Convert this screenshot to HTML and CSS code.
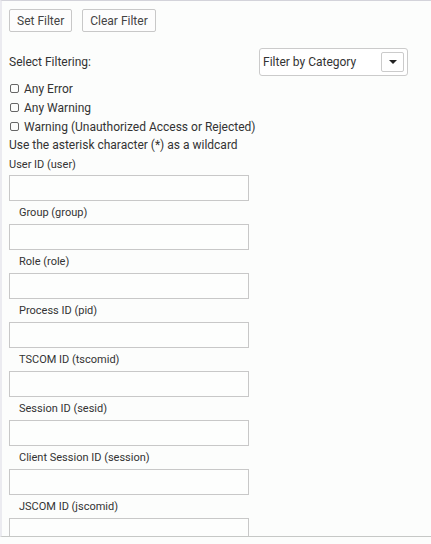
FILE: index.html
```html
<!DOCTYPE html>
<html>
<head>
<meta charset="utf-8">
<link rel="stylesheet" href="styles.css">
</head>
<body>
<div class="panel">
  <div class="buttons">
    <button class="btn">Set Filter</button>
    <button class="btn">Clear Filter</button>
  </div>
  <div class="select-row">
    <span class="select-label">Select Filtering:</span>
    <div class="select">
      <span class="select-text">Filter by Category</span>
      <span class="select-btn"><span class="caret"></span></span>
    </div>
  </div>
  <div class="checks">
    <label class="check"><span class="box"></span>Any Error</label>
    <label class="check"><span class="box"></span>Any Warning</label>
    <label class="check"><span class="box"></span>Warning (Unauthorized Access or Rejected)</label>
  </div>
  <div class="hint">Use the asterisk character (*) as a wildcard</div>
  <div class="field-label first">User ID (user)</div>
  <div class="input"></div>
  <div class="field-label">Group (group)</div>
  <div class="input"></div>
  <div class="field-label">Role (role)</div>
  <div class="input"></div>
  <div class="field-label">Process ID (pid)</div>
  <div class="input"></div>
  <div class="field-label">TSCOM ID (tscomid)</div>
  <div class="input"></div>
  <div class="field-label">Session ID (sesid)</div>
  <div class="input"></div>
  <div class="field-label">Client Session ID (session)</div>
  <div class="input"></div>
  <div class="field-label">JSCOM ID (jscomid)</div>
  <div class="input"></div>
</div>
</body>
</html>
```

FILE: styles.css
```css
html, body {
  margin: 0;
  padding: 0;
  background: #fcfdfc;
}
body {
  font-family: Roboto, "Liberation Sans", sans-serif;
  font-size: 12px;
  color: #333;
}
.panel {
  box-sizing: border-box;
  height: 537px;
  overflow: hidden;
  border-top: 1px solid #d3d3da;
  border-left: 2px solid #ebebf0;
  border-bottom: 1px solid #c6c8c6;
  padding: 8px 0 0 7px;
}
.buttons {
  display: flex;
  gap: 10px;
  height: 23px;
}
.btn {
  box-sizing: border-box;
  height: 23px;
  padding: 0 7px;
  font-family: inherit;
  font-size: 12px;
  color: #444;
  background: #fdfdfd;
  border: 1px solid #c8c8c8;
  border-radius: 2px;
}
.select-row {
  margin-top: 16px;
  width: 399px;
  height: 28px;
  display: flex;
  align-items: center;
  justify-content: space-between;
}
.select {
  box-sizing: border-box;
  width: 149px;
  height: 28px;
  border: 1px solid #cbcbcb;
  border-radius: 3px;
  background: #fff;
  display: flex;
  align-items: center;
  justify-content: space-between;
  padding: 0 3px 0 3px;
}
.select-btn {
  box-sizing: border-box;
  width: 23px;
  height: 20px;
  border: 1px solid #cbcbcb;
  border-radius: 2px;
  display: flex;
  align-items: center;
  justify-content: center;
}
.caret {
  width: 0;
  height: 0;
  border-left: 4px solid transparent;
  border-right: 4px solid transparent;
  border-top: 4px solid #222;
}
.checks {
  margin-top: 3px;
}
.check {
  display: flex;
  align-items: center;
  height: 19px;
}
.box {
  box-sizing: border-box;
  width: 9px;
  height: 9px;
  border: 1.5px solid #666;
  border-radius: 2px;
  margin: 0 5px 0 1px;
}
.hint {
  height: 19px;
  line-height: 19px;
}
.field-label {
  font-size: 11px;
  height: 23px;
  line-height: 23px;
  padding-left: 10px;
}
.field-label.first {
  padding-left: 0;
  height: 20px;
  line-height: 19px;
}
.input {
  box-sizing: border-box;
  width: 240px;
  height: 26px;
  border: 1px solid #c8c8c8;
  background: #fdfefd;
}
```
